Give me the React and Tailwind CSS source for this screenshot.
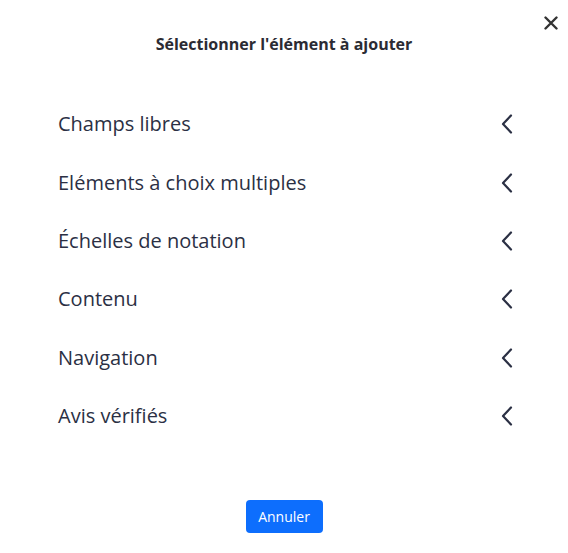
import React from "react";

const items = [
  "Champs libres",
  "Eléments à choix multiples",
  "Échelles de notation",
  "Contenu",
  "Navigation",
  "Avis vérifiés",
];

const Chevron = () => (
  <svg width="12" height="20" viewBox="0 0 12 20" fill="none">
    <path d="M10 1.5L2 10l8 8.5" stroke="#2b3044" strokeWidth="2.2" strokeLinecap="round" strokeLinejoin="round" />
  </svg>
);

export default function App() {
  return (
    <div className="w-[568px] h-[553px] bg-white [font-family:'Open_Sans',sans-serif] text-[#2b3044] flex flex-col">
      <div className="flex justify-end pt-[15px] pr-[9px] h-[30px]">
        <button className="w-[16px] h-[16px] flex items-center justify-center">
          <svg width="14" height="14" viewBox="0 0 14 14">
            <path d="M1.5 1.5l11 11M12.5 1.5l-11 11" stroke="#333" strokeWidth="2.4" strokeLinecap="round" />
          </svg>
        </button>
      </div>
      <h2 className="text-center text-[16px] font-bold mt-[4px] leading-[20px] text-[#2b2b33]">
        Sélectionner l'élément à ajouter
      </h2>
      <ul className="mt-[41px] pl-[58px] pr-[55px]">
        {items.map((label) => (
          <li key={label} className="h-[58.4px] flex items-center justify-between">
            <span className="text-[20px] leading-[26px]">{label}</span>
            <Chevron />
          </li>
        ))}
      </ul>
      <div className="flex justify-center mt-[55px]">
        <button className="w-[77px] h-[33px] rounded-[4px] bg-[#0d6efd] text-white text-[14px] leading-[20px]">
          Annuler
        </button>
      </div>
    </div>
  );
}
